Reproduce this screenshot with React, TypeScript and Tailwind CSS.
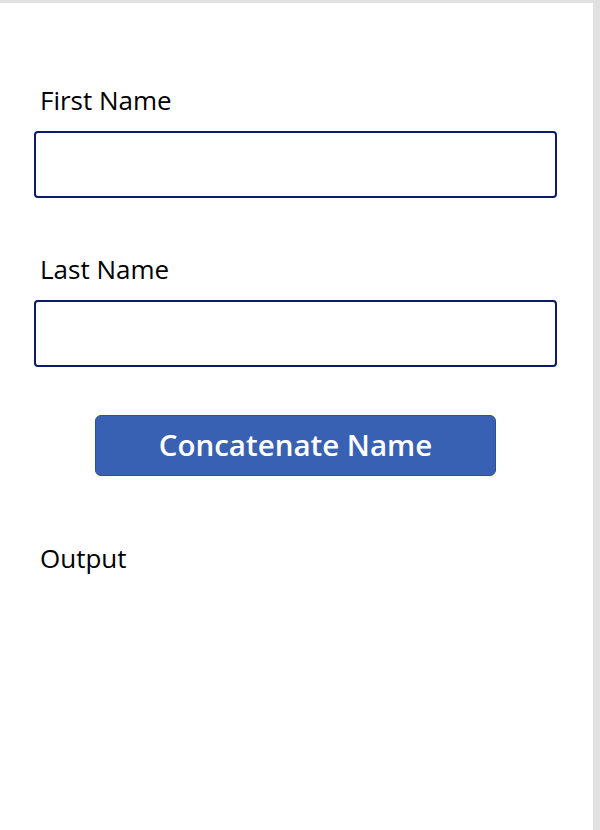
import React, { useState } from "react"

export default function App() {
    const [first, setFirst] = useState("")
    const [last, setLast] = useState("")
    const [output, setOutput] = useState("")

    return (
        <div className="w-[600px] h-[830px] bg-[#e1e1e1] pt-[3px] pr-[7px]" style={{ fontFamily: '"Open Sans", sans-serif' }}>
            <div className="h-full bg-white flex flex-col">
                {/* First name */}
                <div className="pt-[79px] pl-[40px] text-[26px] leading-[36px] text-black">First Name</div>
                <input
                    value={first}
                    onChange={(e) => setFirst(e.target.value)}
                    className="mt-[13px] ml-[34px] w-[523px] h-[67px] border-2 border-[#0b1a6e] rounded-[4px] px-3 text-[26px] outline-none"
                />

                {/* Last name */}
                <div className="mt-[53px] pl-[40px] text-[26px] leading-[36px] text-black">Last Name</div>
                <input
                    value={last}
                    onChange={(e) => setLast(e.target.value)}
                    className="mt-[13px] ml-[34px] w-[523px] h-[67px] border-2 border-[#0b1a6e] rounded-[4px] px-3 text-[26px] outline-none"
                />

                <button
                    onClick={() => setOutput(`${first} ${last}`.trim())}
                    className="mt-[48px] ml-[95px] w-[401px] h-[61px] bg-[#3861b4] border border-[#2c4f99] rounded-[6px] text-white text-[29.5px] font-semibold flex items-center justify-center"
                >
                    Concatenate Name
                </button>

                <div className="mt-[64px] pl-[40px] text-[26px] leading-[36px] text-black">Output</div>
                {output && <div className="pl-[40px] text-[26px] text-black">{output}</div>}
            </div>
        </div>
    )
}
